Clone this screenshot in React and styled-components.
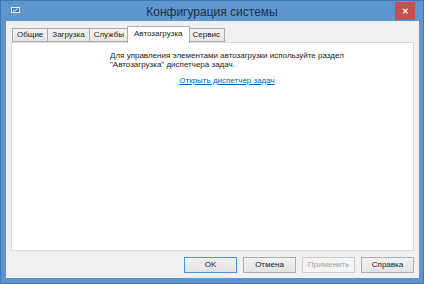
import React from 'react'
import styled, { createGlobalStyle } from 'styled-components'

const GlobalStyle = createGlobalStyle`
  html, body {
    margin: 0;
    padding: 0;
    width: 424px;
    height: 284px;
    overflow: hidden;
    background: #5b93cd;
  }
`

const Window = styled.div`
  width: 424px;
  height: 284px;
  box-sizing: border-box;
  display: flex;
  flex-direction: column;
  background: #5d95d0;
  border: 1px solid #3f78b5;
  font-family: "Liberation Sans", Arial, sans-serif;
`

const TitleBar = styled.div`
  height: 20px;
  display: grid;
  grid-template-columns: 60px 1fr 60px;
  align-items: start;
`

const AppIcon = styled.div`
  padding: 5px 0 0 9px;
  svg { display: block; }
`

const Title = styled.div`
  text-align: center;
  font-size: 12px;
  line-height: 22px;
  color: #24303e;
`

const CloseButton = styled.div`
  justify-self: end;
  margin-right: 8px;
  width: 20px;
  height: 18px;
  margin-top: 1px;
  background: #c7504f;
  color: #fff;
  display: flex;
  align-items: center;
  justify-content: center;
  font-size: 8px;
  font-weight: bold;
`

const Client = styled.div`
  flex: 1;
  margin: 0 4px 5px 5px;
  background: #f0f0f0;
  padding: 5px 5px 5px 5px;
  display: flex;
  flex-direction: column;
`

const TabStrip = styled.div`
  display: flex;
  align-items: flex-end;
  height: 16px;
  padding-left: 1px;
  position: relative;
  z-index: 1;
`

const Tab = styled.div`
  box-sizing: border-box;
  height: ${p => p.$active ? '17px' : '14px'};
  margin-bottom: ${p => p.$active ? '-1px' : '0'};
  padding: 0 ${p => p.$active ? '6px' : '4px'};
  margin-left: ${p => p.$active ? '-2px' : '-1px'};
  margin-right: ${p => p.$active ? '-1px' : '0'};
  border: 1px solid #acacac;
  border-bottom: ${p => p.$active ? 'none' : '1px solid #acacac'};
  background: ${p => p.$active ? '#fff' : 'linear-gradient(#f3f3f3, #e6e6e6)'};
  font-size: 8px;
  line-height: ${p => p.$active ? '13px' : '12px'};
  color: #1a1a1a;
  white-space: nowrap;
  position: relative;
  z-index: ${p => p.$active ? 2 : 1};
  &:first-child { margin-left: 0; }
`

const Panel = styled.div`
  flex: 1;
  background: #fff;
  border: 1px solid #d9d9d9;
  padding: 8px 0 0 98px;
`

const Message = styled.div`
  width: 240px;
  font-size: 8px;
  line-height: 9px;
  color: #1a1a1a;
`

const LinkRow = styled.div`
  width: 234px;
  margin-top: 0;
  text-align: center;
`

const Link = styled.a`
  font-size: 8px;
  color: #0a5fb4;
  text-decoration: underline;
  cursor: pointer;
`

const ButtonRow = styled.div`
  display: flex;
  justify-content: flex-end;
  gap: 6px;
  padding-top: 6px;
`

const Button = styled.div`
  box-sizing: border-box;
  width: 53px;
  height: 16px;
  border: 1px solid ${p => p.$default ? '#4f8fd6' : p.$disabled ? '#cdcdcd' : '#adadad'};
  background: ${p => p.$disabled ? '#f4f4f4' : 'linear-gradient(#f2f2f2, #e3e3e3)'};
  color: ${p => p.$disabled ? '#a3a3a3' : '#1a1a1a'};
  font-size: 8px;
  line-height: 14px;
  text-align: center;
`

const tabs = ['Общие', 'Загрузка', 'Службы', 'Автозагрузка', 'Сервис']

const MsconfigIcon = () => (
  <svg width="11" height="11" viewBox="0 0 11 11">
    <rect x="0.5" y="0.5" width="10" height="7" fill="#dfe9f5" stroke="#7b8fa8" />
    <rect x="2" y="2" width="7" height="4" fill="#3d7fc9" />
    <rect x="3" y="8" width="5" height="2" fill="#8a97a8" />
    <path d="M3 4 L4.5 5.3 L7.5 2.6" stroke="#fff" strokeWidth="1" fill="none" />
  </svg>
)

export default function App() {
  return (
    <Window>
      <GlobalStyle />
      <TitleBar>
        <AppIcon><MsconfigIcon /></AppIcon>
        <Title>Конфигурация системы</Title>
        <CloseButton>✕</CloseButton>
      </TitleBar>
      <Client>
        <TabStrip>
          {tabs.map(t => (
            <Tab key={t} $active={t === 'Автозагрузка'}>{t}</Tab>
          ))}
        </TabStrip>
        <Panel>
          <Message>
            Для управления элементами автозагрузки используйте раздел<br />
            "Автозагрузка" диспетчера задач.
          </Message>
          <LinkRow>
            <Link>Открыть диспетчер задач</Link>
          </LinkRow>
        </Panel>
        <ButtonRow>
          <Button $default>OK</Button>
          <Button>Отмена</Button>
          <Button $disabled>Применить</Button>
          <Button>Справка</Button>
        </ButtonRow>
      </Client>
    </Window>
  )
}
